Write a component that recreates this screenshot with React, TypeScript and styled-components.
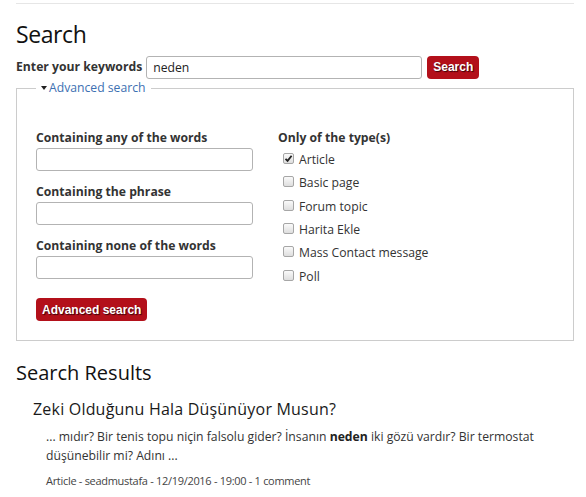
import React from "react";
import styled, { createGlobalStyle } from "styled-components";

const Global = createGlobalStyle`
  html, body { margin: 0; padding: 0; background: #fff; }
  body { font-family: "Open Sans", "DejaVu Sans", sans-serif; color: #333; font-size: 12.2px; }
  * { box-sizing: border-box; }
`;

const Page = styled.div`
  width: 558px;
  margin-left: 16px;
  padding-top: 3px;
`;

const TopRule = styled.div`
  height: 1px;
  background: #e6e6e6;
`;

const Title = styled.h1`
  margin: 16px 0 0 0;
  font-weight: 400;
  font-size: 23px;
  line-height: 28px;
  letter-spacing: -0.4px;
  color: #111;
`;

const KeywordRow = styled.div`
  display: flex;
  align-items: center;
  margin-top: 7px;
  height: 24px;
`;

const Label = styled.label`
  font-weight: 700;
  font-size: 12.2px;
  line-height: 18px;
  color: #333;
  display: block;
`;

const TextInput = styled.input<{ $w: number }>`
  width: ${(p) => p.$w}px;
  height: 23px;
  border: 1px solid #b3b3b3;
  border-radius: 3px;
  padding: 0 6px;
  font-family: "Open Sans", sans-serif;
  font-size: 12.2px;
  color: #222;
  outline: none;
`;

const RedButton = styled.button`
  background: #b3101a;
  color: #fff;
  border: none;
  border-radius: 4px;
  height: 23px;
  padding: 0 6px;
  font-family: "Liberation Sans", Arial, sans-serif;
  font-weight: 700;
  font-size: 12px;
  text-shadow: 1px 1px 1px #3a0008;
  cursor: pointer;
`;

const Fieldset = styled.fieldset`
  margin: 1px 0 0 0;
  border: 1px solid #cccccc;
  padding: 33px 19px 18px 19px;
  height: 261px;
`;

const Legend = styled.legend`
  margin-left: 0;
  padding: 0 5px;
  font-size: 12.2px;
  color: #3d70b2;
  line-height: 16px;
`;

const Caret = styled.span`
  display: inline-block;
  width: 0;
  height: 0;
  border-left: 3.5px solid transparent;
  border-right: 3.5px solid transparent;
  border-top: 4px solid #222;
  margin-right: 2px;
  vertical-align: middle;
  position: relative;
  top: -1px;
`;

const Columns = styled.div`
  display: flex;
  gap: 25px;
`;

const LeftCol = styled.div`
  width: 217px;
  display: flex;
  flex-direction: column;
`;

const FieldGroup = styled.div`
  display: flex;
  flex-direction: column;
  gap: 1px;
  margin-bottom: 12px;
`;

const RightCol = styled.div`
  display: flex;
  flex-direction: column;
`;

const CheckRow = styled.label`
  display: flex;
  align-items: center;
  height: 23.3px;
  padding-left: 5px;
  font-size: 12.2px;
  color: #333;
`;

const Box = styled.span`
  width: 11px;
  height: 11px;
  border: 1px solid #a6a6a6;
  border-radius: 2px;
  background: linear-gradient(#fafafa, #dedede);
  margin-right: 5px;
  display: inline-flex;
  align-items: center;
  justify-content: center;
  position: relative;
  top: -1px;
`;

const SubmitWrap = styled.div`
  margin-top: 7px;
`;

const ResultsTitle = styled.h2`
  margin: 20px 0 0 0;
  font-weight: 400;
  font-size: 20px;
  line-height: 24px;
  color: #111;
  letter-spacing: 0;
`;

const Result = styled.div`
  margin-top: 14px;
  padding-left: 17px;
`;

const ResultTitle = styled.h3`
  margin: 0;
  font-weight: 400;
  font-size: 16px;
  line-height: 20px;
  letter-spacing: 0.2px;
  color: #1a1a1a;
`;

const Snippet = styled.p`
  margin: 8px 0 0 13px;
  font-size: 12.2px;
  line-height: 19px;
  color: #333;
  strong { color: #222; }
`;

const Meta = styled.p`
  margin: 9px 0 0 13px;
  font-size: 11px;
  line-height: 14px;
  color: #444;
  letter-spacing: -0.3px;
`;

const types = ["Article", "Basic page", "Forum topic", "Harita Ekle", "Mass Contact message", "Poll"];

export default function App() {
  return (
    <Page>
      <Global />
      <TopRule />
      <Title>Search</Title>
      <KeywordRow>
        <Label style={{ marginRight: 4 }}>Enter your keywords</Label>
        <TextInput $w={276} defaultValue="neden" />
        <span style={{ width: 5 }} />
        <RedButton>Search</RedButton>
      </KeywordRow>
      <Fieldset>
        <Legend>
          <Caret />
          Advanced search
        </Legend>
        <Columns>
          <LeftCol>
            <FieldGroup>
              <Label>Containing any of the words</Label>
              <TextInput $w={217} />
            </FieldGroup>
            <FieldGroup>
              <Label>Containing the phrase</Label>
              <TextInput $w={217} />
            </FieldGroup>
            <FieldGroup>
              <Label>Containing none of the words</Label>
              <TextInput $w={217} />
            </FieldGroup>
            <SubmitWrap>
              <RedButton>Advanced search</RedButton>
            </SubmitWrap>
          </LeftCol>
          <RightCol>
            <Label style={{ marginBottom: 1 }}>Only of the type(s)</Label>
            {types.map((t, i) => (
              <CheckRow key={t}>
                <Box>
                  {i === 0 && (
                    <svg width="9" height="9" viewBox="0 0 9 9">
                      <path d="M1.5 4.8 L3.6 6.9 L7.6 1.8" stroke="#222" strokeWidth="1.8" fill="none" />
                    </svg>
                  )}
                </Box>
                {t}
              </CheckRow>
            ))}
          </RightCol>
        </Columns>
      </Fieldset>
      <ResultsTitle>Search Results</ResultsTitle>
      <Result>
        <ResultTitle>Zeki Olduğunu Hala Düşünüyor Musun?</ResultTitle>
        <Snippet>
          ... mıdır? Bir tenis topu niçin falsolu gider? İnsanın <strong>neden</strong> iki gözü vardır? Bir termostat düşünebilir mi? Adını ...
        </Snippet>
        <Meta>Article - seadmustafa - 12/19/2016 - 19:00 - 1 comment</Meta>
      </Result>
    </Page>
  );
}
